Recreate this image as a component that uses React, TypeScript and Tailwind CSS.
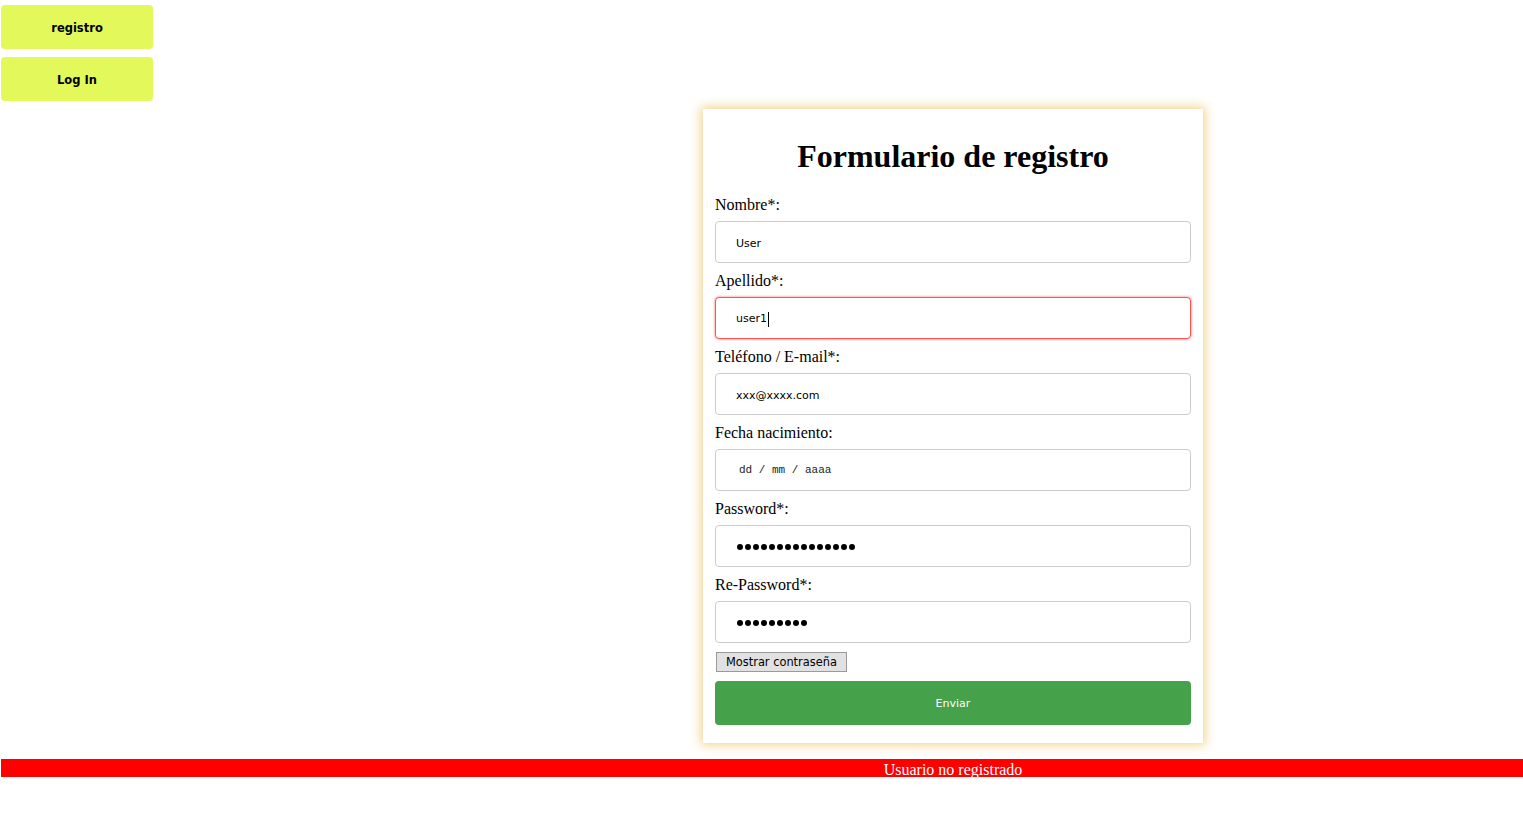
import React from "react";

function Label({ children }: { children: React.ReactNode }) {
  return (
    <label className="block h-[18px] font-['Liberation_Serif',serif] text-[16px] leading-[18px] text-black">
      {children}
    </label>
  );
}

function Dots({ n }: { n: number }) {
  return (
    <div className="mt-[7px] mb-[9px] flex h-[42px] items-center gap-[2px] rounded-[4px] border border-[#cccccc] bg-white pl-[21px] pt-px">
      {Array.from({ length: n }).map((_, i) => (
        <span key={i} className="h-[6px] w-[6px] rounded-full bg-black" />
      ))}
    </div>
  );
}

export default function App() {
  return (
    <div className="min-h-[822px] w-[1523px] bg-white pl-px font-['DejaVu_Sans',Verdana,sans-serif]">
      <div className="flex flex-col gap-2 pt-[5px]">
        <button className="h-[44px] w-[152px] rounded-[4px] bg-[#e3f95b] pt-1 text-[11.5px] font-bold text-black">
          registro
        </button>
        <button className="h-[44px] w-[152px] rounded-[4px] bg-[#e3f95b] pt-1 text-[11.5px] font-bold text-black">
          Log In
        </button>
      </div>

      <div className="mt-2 flex justify-center pl-[382px]">
        <form className="flex w-[500px] flex-col bg-white px-[12px] pb-[18px] pt-[29px] shadow-[0_0_10px_2px_rgba(238,204,120,0.85)]">
          <h1 className="h-[37px] text-center font-['Liberation_Serif',serif] text-[32px] font-bold leading-[37px] text-black">
            Formulario de registro
          </h1>
          <div className="h-[21px]" />

          <Label>Nombre*:</Label>
          <input
            readOnly
            defaultValue="User"
            className="mt-[7px] mb-[9px] h-[42px] rounded-[4px] border border-[#cccccc] bg-white pl-[20px] pt-[2px] text-[11px] text-black outline-none"
          />

          <Label>Apellido*:</Label>
          <div className="mt-[7px] mb-[9px] flex h-[42px] items-center rounded-[4px] border border-[#ff5252] bg-white pl-[20px] pt-[2px] text-[11px] text-black shadow-[0_0_2px_1px_rgba(255,60,60,0.35)]">
            <span>user1</span>
            <span className="ml-px inline-block h-[15px] w-px bg-black" />
          </div>

          <Label>Teléfono / E-mail*:</Label>
          <input
            readOnly
            defaultValue="xxx@xxxx.com"
            className="mt-[7px] mb-[9px] h-[42px] rounded-[4px] border border-[#cccccc] bg-white pl-[20px] pt-[2px] text-[11px] text-black outline-none"
          />

          <Label>Fecha nacimiento:</Label>
          <div className="mt-[7px] mb-[9px] flex h-[42px] items-center rounded-[4px] border border-[#cccccc] bg-white pl-[23px] font-['Liberation_Mono',monospace] text-[11px] text-[#222]">
            dd / mm / aaaa
          </div>

          <Label>Password*:</Label>
          <Dots n={15} />

          <Label>Re-Password*:</Label>
          <Dots n={9} />

          <div className="flex">
            <button
              type="button"
              className="ml-px h-[20px] border border-[#9a9a9a] bg-[#e1e1e1] px-[9px] pt-px text-[11.4px] leading-[17px] text-black"
            >
              Mostrar contraseña
            </button>
          </div>

          <button
            type="button"
            className="mt-[9px] h-[44px] rounded-[4px] bg-[#46a14b] pt-[2px] text-[11px] text-white"
          >
            Enviar
          </button>
        </form>
      </div>

      <div className="mt-[16px] flex h-[18px] items-center justify-center bg-[#ff0000] pl-[382px] pt-[3px]">
        <span className="font-['Liberation_Serif',serif] text-[16px] leading-[18px] text-white">
          Usuario no registrado
        </span>
      </div>
    </div>
  );
}
